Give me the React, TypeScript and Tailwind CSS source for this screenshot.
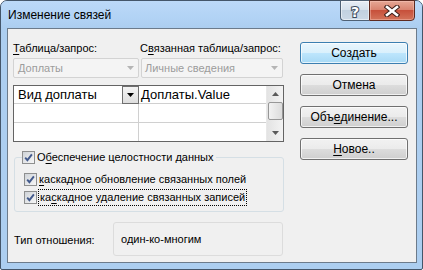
import type { ReactNode } from "react";

function U({ children }: { children: ReactNode }) {
    return <span className="underline underline-offset-[2px]">{children}</span>
}

function Check() {
    return (
        <span className="w-[13px] h-[13px] shrink-0 flex items-center justify-center border border-[#8e8f8f] bg-[linear-gradient(135deg,#cfd3d8,#f7f7f7)]">
            <svg width="11" height="11" viewBox="0 0 11 11">
                <path d="M2.2 5.6 L4.4 8.2 L8.9 2.4" fill="none" stroke="#435a8c" strokeWidth="1.9" />
            </svg>
        </span>
    )
}

function Btn({ children, primary }: { children: ReactNode, primary?: boolean }) {
    return (
        <div className={`h-[22px] w-full flex items-center justify-center rounded-[3px] border text-[12px] text-black shadow-[inset_0_0_0_1px_rgba(255,255,255,0.7)] ${primary
            ? 'border-[#3c7fb1] bg-[linear-gradient(#eaf6fd_0%,#d9f0fc_50%,#bee6fd_50%,#a7d9f5_100%)]'
            : 'border-[#707070] bg-[linear-gradient(#f2f2f2_0%,#ebebeb_50%,#dddddd_50%,#cfcfcf_100%)]'}`}>
            {children}
        </div>
    )
}

function Arrow({ color = "#000", up }: { color?: string, up?: boolean }) {
    return (
        <svg width="7" height="4" viewBox="0 0 7 4">
            <path d={up ? "M0 4 L3.5 0 L7 4 Z" : "M0 0 L7 0 L3.5 4 Z"} fill={color} />
        </svg>
    )
}

export default function App() {
    return (
        <div className="w-[423px] h-[270px] bg-white [font-family:Liberation_Sans,Arial,sans-serif] text-[12px] leading-[16px] text-black">
            <div className="w-full h-full flex flex-col rounded-t-[7px] rounded-b-[2px] border border-[#44566a] bg-[#acceF0]">

                {/* title bar */}
                <div className="h-[27px] shrink-0 flex justify-between rounded-t-[6px] bg-[linear-gradient(#bcd9f8,#b2d3f5_60%,#acceF0)]">
                    <div className="pl-[7px] pt-[6px] text-[12px] whitespace-nowrap">Изменение связей</div>
                    <div className="flex -mt-px mr-[7px] h-[21px]">
                        <div className="w-[29px] h-full flex items-center justify-center rounded-bl-[4px] border border-[#4f6175] border-r-0 bg-[linear-gradient(#e7eef6_0%,#d6e1ec_45%,#c2d1e0_50%,#cbd8e6_100%)] shadow-[inset_0_0_0_1px_rgba(255,255,255,0.5)]">
                            <svg width="14" height="16" viewBox="0 0 14 16">
                                <text x="7" y="13.5" textAnchor="middle" fontFamily="DejaVu Sans" fontWeight="bold" fontSize="14" fill="#fff" stroke="#3b4b5e" strokeWidth="2" paintOrder="stroke">?</text>
                            </svg>
                        </div>
                        <div className="w-[46px] h-full flex items-center justify-center rounded-br-[4px] border border-[#5e2a20] bg-[linear-gradient(#e6a795_0%,#d98470_45%,#c7503b_50%,#d3735a_100%)] shadow-[inset_0_0_0_1px_rgba(255,210,200,0.4)]">
                            <svg width="16" height="12" viewBox="0 0 16 12">
                                <path d="M3 2 L13 10 M13 2 L3 10" stroke="#3d1f1a" strokeWidth="4.6" strokeLinecap="square" />
                                <path d="M3 2 L13 10 M13 2 L3 10" stroke="#fff" strokeWidth="2.6" strokeLinecap="square" />
                            </svg>
                        </div>
                    </div>
                </div>

                {/* client area */}
                <div className="flex-1 ml-[6px] mr-[5px] mb-[6px] border border-[#6c7b8b] bg-[#f0f0f0] flex pl-[5px] whitespace-nowrap">

                    <div className="w-[270px] shrink-0 pt-[11px] flex flex-col text-[11px]">
                        <div className="h-[16px] flex">
                            <div className="w-[127px] shrink-0"><U>Т</U>аблица/запрос:</div>
                            <div>С<U>в</U>язанная таблица/запрос:</div>
                        </div>

                        <div className="mt-[2px] h-[20px] flex gap-[2px]">
                            <div className="w-[126px] shrink-0 flex items-center justify-between rounded-[2px] border border-[#d3d3d3] bg-[#f4f4f4] pl-[4px] pr-[4px] text-[#9c9c9c]">
                                <span>Доплаты</span>
                                <Arrow color="#b5b5b5" />
                            </div>
                            <div className="flex-1 flex items-center justify-between rounded-[2px] border border-[#d3d3d3] bg-[#f4f4f4] pl-[3px] pr-[4px] text-[#9c9c9c]">
                                <span>Личные сведения</span>
                                <Arrow color="#b5b5b5" />
                            </div>
                        </div>

                        {/* field grid */}
                        <div className="mt-[7px] h-[57px] w-[271px] flex border border-[#646464] bg-white text-[13px]">
                            <div className="w-[125px] shrink-0 flex flex-col border-r border-[#d0d0d0]">
                                <div className="h-[18px] border-b border-[#d0d0d0] flex items-center justify-between pl-[4px]">
                                    <span className="leading-[18px]">Вид доплаты</span>
                                    <span className="w-[17px] h-[18px] flex items-center justify-center border border-[#6f6f6f] bg-[linear-gradient(#f4f4f4,#dedede)] -mr-px">
                                        <Arrow />
                                    </span>
                                </div>
                                <div className="h-[19px] border-b border-[#d0d0d0]"></div>
                                <div className="flex-1"></div>
                            </div>
                            <div className="flex-1 flex flex-col">
                                <div className="h-[18px] border-b border-[#d0d0d0] pl-[2px] leading-[18px]">Доплаты.Value</div>
                                <div className="h-[19px] border-b border-[#d0d0d0]"></div>
                                <div className="flex-1"></div>
                            </div>
                            <div className="w-[17px] shrink-0 flex flex-col items-center bg-[linear-gradient(90deg,#e3e3e3,#f3f3f3)] border-l border-[#e8e8e8]">
                                <div className="h-[16px] flex items-center justify-center"><Arrow color="#5a5a5a" up /></div>
                                <div className="h-[18px] w-[15px] rounded-[2px] border border-[#979797] bg-[linear-gradient(90deg,#f2f2f2,#dcdcdc)]"></div>
                                <div className="flex-1 flex items-end justify-center pb-[6px]"><Arrow color="#5a5a5a" /></div>
                            </div>
                        </div>

                        {/* referential integrity group */}
                        <div className="relative mt-[15px] ml-[1px] h-[55px] w-[270px] rounded-[3px] border border-[#d5dfe5] pt-[12px] pl-[9px]">
                            <div className="absolute left-[7px] -top-[9px] flex items-center gap-[2px] bg-[#f0f0f0] pr-[3px]">
                                <Check />
                                <span className="leading-[16px]">О<U>б</U>еспечение целостности данных</span>
                            </div>
                            <div className="h-[18px] flex items-center gap-[2px]">
                                <Check />
                                <span><U>к</U>аскадное обновление связанных полей</span>
                            </div>
                            <div className="h-[18px] flex items-center gap-[1px]">
                                <Check />
                                <span className="border border-dotted border-black px-px leading-[15px]">ка<U>с</U>кадное удаление связанных записей</span>
                            </div>
                        </div>

                        {/* relationship type */}
                        <div className="mt-[10px] flex items-center">
                            <div className="w-[100px] shrink-0 pl-[1px] pt-[2px]">Тип отношения:</div>
                            <div className="w-[170px] h-[34px] flex items-center rounded-[3px] border border-[#dcdcdc] pl-[7px]">
                                один-ко-многим
                            </div>
                        </div>
                    </div>

                    {/* buttons */}
                    <div className="ml-[17px] w-[108px] shrink-0 mt-[13px] flex flex-col gap-[10px]">
                        <Btn primary>Создать</Btn>
                        <Btn>Отмена</Btn>
                        <Btn>Объ<U>е</U>динение...</Btn>
                        <Btn><U>Н</U>овое..</Btn>
                    </div>
                </div>
            </div>
        </div>
    )
}
